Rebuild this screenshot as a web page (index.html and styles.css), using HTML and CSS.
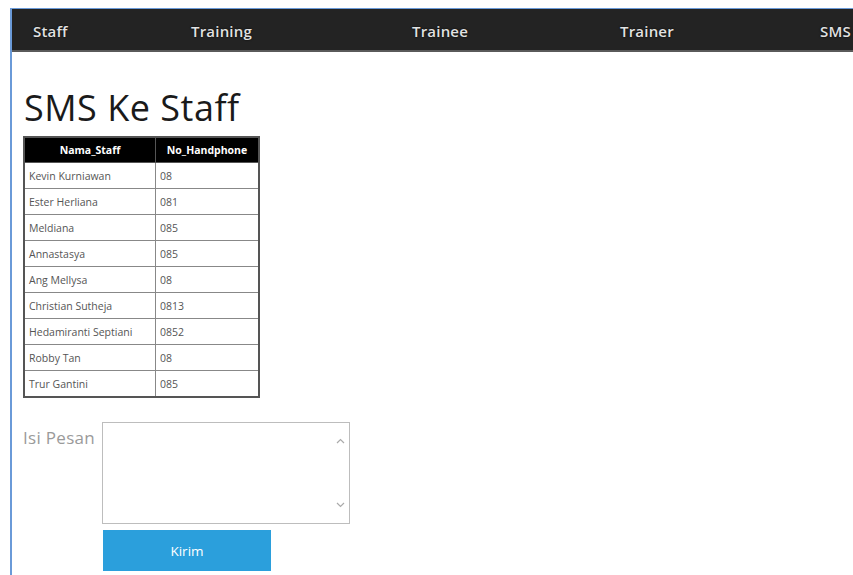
FILE: index.html
```html
<!DOCTYPE html>
<html lang="id">
<head>
<meta charset="utf-8">
<title>SMS Ke Staff</title>
<link rel="stylesheet" href="styles.css">
</head>
<body>
<div class="frame">
  <nav class="navbar">
    <a class="nav-item">Staff</a>
    <a class="nav-item">Training</a>
    <a class="nav-item">Trainee</a>
    <a class="nav-item">Trainer</a>
    <a class="nav-item">SMS</a>
  </nav>
  <main class="content">
    <h1 class="title">SMS Ke Staff</h1>
    <table class="staff-table">
      <thead>
        <tr><th>Nama_Staff</th><th>No_Handphone</th></tr>
      </thead>
      <tbody>
        <tr><td>Kevin Kurniawan</td><td>08</td></tr>
        <tr><td>Ester Herliana</td><td>081</td></tr>
        <tr><td>Meldiana</td><td>085</td></tr>
        <tr><td>Annastasya</td><td>085</td></tr>
        <tr><td>Ang Mellysa</td><td>08</td></tr>
        <tr><td>Christian Sutheja</td><td>0813</td></tr>
        <tr><td>Hedamiranti Septiani</td><td>0852</td></tr>
        <tr><td>Robby Tan</td><td>08</td></tr>
        <tr><td>Trur Gantini</td><td>085</td></tr>
      </tbody>
    </table>
    <form class="sms-form">
      <label class="form-label" for="pesan">Isi Pesan</label>
      <div class="textarea-box">
        <textarea id="pesan" class="message"></textarea>
        <div class="scroll-arrows">
          <svg width="9" height="6" viewBox="0 0 9 6"><path d="M1 5 L4.5 1.5 L8 5" fill="none" stroke="#aaa" stroke-width="1.2"/></svg>
          <svg width="9" height="6" viewBox="0 0 9 6"><path d="M1 1 L4.5 4.5 L8 1" fill="none" stroke="#aaa" stroke-width="1.2"/></svg>
        </div>
      </div>
      <button type="button" class="send-btn">Kirim</button>
    </form>
  </main>
</div>
</body>
</html>
```

FILE: styles.css
```css
html, body {
  margin: 0;
  padding: 0;
  background: #ffffff;
}

body {
  font-family: "Open Sans", "Noto Sans", sans-serif;
  height: 575px;
  overflow: hidden;
}

.frame {
  margin: 8px 0 0 10px;
  border-left: 2px solid #6a9ad8;
  border-top: 1px solid #6a9ad8;
  height: 575px;
}

.navbar {
  display: grid;
  grid-template-columns: 158px 221px 208px 200px auto;
  align-items: center;
  padding: 3px 0 0 21px;
  box-sizing: border-box;
  background: #232323;
  border-bottom: 2px solid #5a5a5a;
  height: 43px;
}

.nav-item {
  color: #e2e2e2;
  font-size: 15px;
  font-weight: 600;
  letter-spacing: 0.2px;
  text-shadow: 0 0 2px #000;
  white-space: nowrap;
}

.content {
  padding: 34px 0 0 11px;
}

.title {
  margin: 0 0 6px 1px;
  font-family: "Open Sans", sans-serif;
  font-weight: 400;
  font-size: 36px;
  line-height: 44px;
  color: #1a1a1a;
  letter-spacing: 0.5px;
}

.staff-table {
  border-collapse: collapse;
  border: 2px solid #555;
  font-size: 10.5px;
  color: #555;
  margin-bottom: 24px;
}

.staff-table th {
  background: #000;
  color: #fff;
  font-weight: 700;
  height: 24px;
  padding: 0 3px;
  text-align: center;
  border: 1px solid #555;
}

.staff-table th:first-child { width: 124px; }
.staff-table th:last-child { width: 96px; }

.staff-table td {
  height: 25px;
  padding: 0 4px;
  border: 1px solid #888;
  white-space: nowrap;
}

.sms-form {
  display: grid;
  grid-template-columns: 79px 248px;
  row-gap: 6px;
}

.form-label {
  padding-top: 4px;
  font-size: 17px;
  letter-spacing: 0.3px;
  color: #9a9a9a;
}

.textarea-box {
  position: relative;
  height: 102px;
}

.message {
  box-sizing: border-box;
  width: 248px;
  height: 102px;
  border: 1px solid #bdbdbd;
  resize: none;
  margin: 0;
  display: block;
}

.scroll-arrows {
  position: absolute;
  right: 5px;
  top: 16px;
  bottom: 16px;
  display: flex;
  flex-direction: column;
  justify-content: space-between;
}

.send-btn {
  grid-column: 2;
  width: 168px;
  height: 41px;
  margin-left: 1px;
  border: none;
  background: #2b9fdc;
  color: #fff;
  font-family: "Open Sans", sans-serif;
  font-size: 13.5px;
  font-weight: 400;
}
```
